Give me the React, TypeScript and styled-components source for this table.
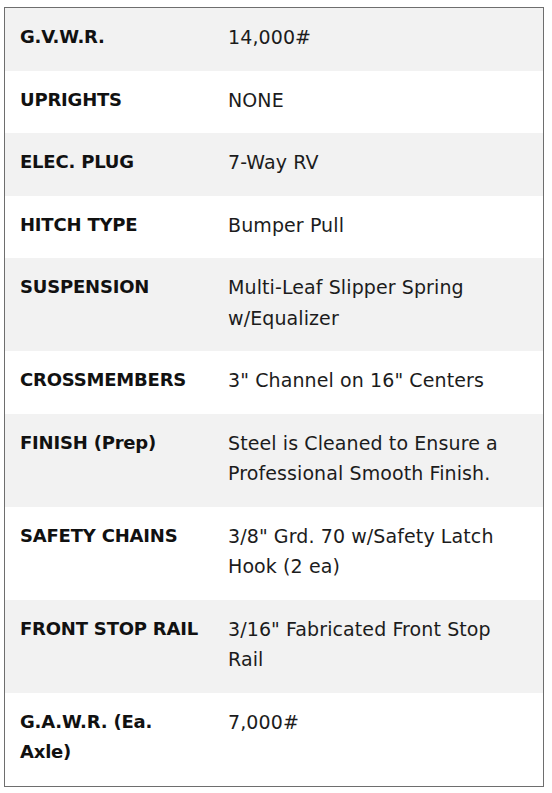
import React from "react";
import styled, { createGlobalStyle } from "styled-components";

const GlobalStyle = createGlobalStyle`
  html, body {
    margin: 0;
    padding: 0;
    background: #ffffff;
  }
  body {
    font-family: "DejaVu Sans", "Liberation Sans", sans-serif;
  }
`;

const Table = styled.div`
  margin: 7px 0 0 4px;
  width: 540px;
  box-sizing: border-box;
  border: 1px solid #6e6e6e;
  display: flex;
  flex-direction: column;
`;

const Row = styled.div<{ $shaded: boolean }>`
  display: grid;
  grid-template-columns: 208px 1fr;
  background: ${(p) => (p.$shaded ? "#f2f2f2" : "#ffffff")};
`;

const Cell = styled.div`
  padding: 14px 16px 18px 15px;
  font-size: 19px;
  line-height: 30.5px;
  white-space: pre-line;
`;

const Label = styled(Cell)`
  padding-right: 6px;
  font-weight: 700;
  font-size: 18px;
  letter-spacing: -0.2px;
  color: #111111;
`;

const Value = styled(Cell)`
  font-weight: 400;
  color: #1c1c1c;
  letter-spacing: 0.1px;
`;

const specs: { label: string; value: string }[] = [
  { label: "G.V.W.R.", value: "14,000#" },
  { label: "UPRIGHTS", value: "NONE" },
  { label: "ELEC. PLUG", value: "7-Way RV" },
  { label: "HITCH TYPE", value: "Bumper Pull" },
  { label: "SUSPENSION", value: "Multi-Leaf Slipper Spring\nw/Equalizer" },
  { label: "CROSSMEMBERS", value: "3\" Channel on 16\" Centers" },
  {
    label: "FINISH (Prep)",
    value: "Steel is Cleaned to Ensure a\nProfessional Smooth Finish.",
  },
  {
    label: "SAFETY CHAINS",
    value: "3/8\" Grd. 70 w/Safety Latch\nHook (2 ea)",
  },
  {
    label: "FRONT STOP RAIL",
    value: "3/16\" Fabricated Front Stop\nRail",
  },
  { label: "G.A.W.R. (Ea.\nAxle)", value: "7,000#" },
];

export default function App() {
  return (
    <>
      <GlobalStyle />
      <Table>
        {specs.map((s, i) => (
          <Row key={i} $shaded={i % 2 === 0}>
            <Label>{s.label}</Label>
            <Value>{s.value}</Value>
          </Row>
        ))}
      </Table>
    </>
  );
}
